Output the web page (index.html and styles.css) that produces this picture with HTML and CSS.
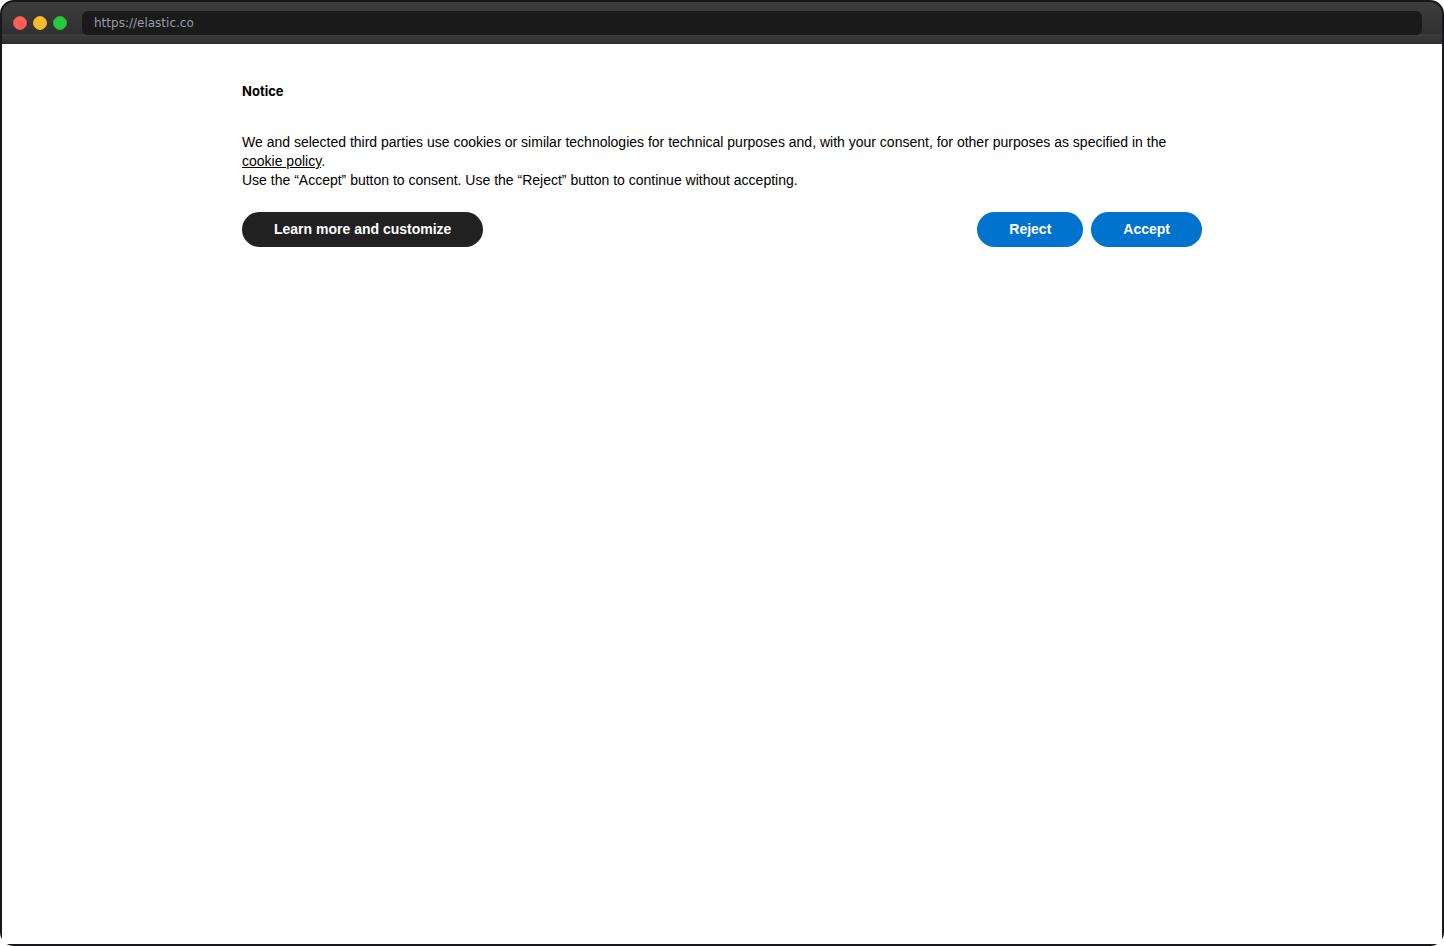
FILE: index.html
```html
<!DOCTYPE html>
<html lang="en">
<head>
  <meta charset="UTF-8" />
  <meta name="viewport" content="width=device-width, initial-scale=1.0"/>
  <title>elastic.co</title>
  <link rel="stylesheet" href="styles.css">
</head>
<body>
  <div class="window">
    <header class="titlebar">
      <div class="dots">
        <span class="dot red"></span>
        <span class="dot yellow"></span>
        <span class="dot green"></span>
      </div>
      <input class="url" type="text" value="https://elastic.co" aria-label="Address">
    </header>

    <main class="page">
      <section class="notice">
        <h1>Notice</h1>
        <p>
          We and selected third parties use cookies or similar technologies for technical purposes and, with your consent, for other purposes as specified in the <a href="#">cookie policy</a>.<br>
          Use the “Accept” button to consent. Use the “Reject” button to continue without accepting.
        </p>
        <div class="buttons">
          <button type="button" class="customize">Learn more and customize</button>
          <button type="button">Reject</button>
          <button type="button">Accept</button>
        </div>
      </section>
    </main>
  </div>
</body>
</html>
```

FILE: styles.css
```css
* {
  box-sizing: border-box;
}

body {
  margin: 0;
  background: #fff;
  color: #000;
  font-family: "Liberation Sans", Arial, sans-serif;
  font-size: 14px;
}

.window {
  display: flex;
  flex-direction: column;
  min-height: 100vh;
  border: 2px solid #18181a;
  border-radius: 14px;
  background: #18181a;
}

/* browser bar, the gradient starts again under the first 32px */
.titlebar {
  display: flex;
  align-items: center;
  gap: 15px;
  height: 42px;
  padding: 0 20px 0 11px;
  border-radius: 12px 12px 0 0;
  background: linear-gradient(#3d3d3d, #303030) 0 0 / 100% 32px no-repeat,
    linear-gradient(#3d3d3d, #2f2f2f) 0 100% / 100% 10px no-repeat;
}

.dots {
  display: flex;
  gap: 6px;
}

.dot {
  width: 14px;
  height: 14px;
  border: 1px solid;
  border-radius: 50%;
}

.red {
  background: #ff5f57;
  border-color: #e9524a;
}

.yellow {
  background: #febc2e;
  border-color: #f1ae1b;
}

.green {
  background: #28c840;
  border-color: #24b539;
}

.url {
  flex: 1;
  min-width: 0;
  height: 24px;
  padding: 0 12px;
  border: none;
  border-radius: 6px;
  background: #1a1a1a;
  color: #9b9ba8;
  font-family: "DejaVu Sans", sans-serif;
  font-size: 12px;
}

.page {
  flex: 1;
  padding: 38px 20px;
  background: #fff;
}

.notice {
  max-width: 960px;
  margin: 0 auto;
}

h1 {
  margin: 0 0 32px;
  font-family: Inter, sans-serif;
  font-size: 13px;
  font-weight: 700;
  line-height: 19px;
}

p {
  margin: 0 0 22px;
  line-height: 19px;
}

a {
  color: inherit;
}

.buttons {
  display: flex;
  flex-wrap: wrap;
  gap: 8px;
}

button {
  height: 35px;
  padding: 0 32px 2px;
  border: none;
  border-radius: 18px;
  background: #0073ce;
  color: #fff;
  font-family: inherit;
  font-size: 14px;
  font-weight: 700;
  cursor: pointer;
}

.customize {
  margin-right: auto;
  background: #212121;
}
```
